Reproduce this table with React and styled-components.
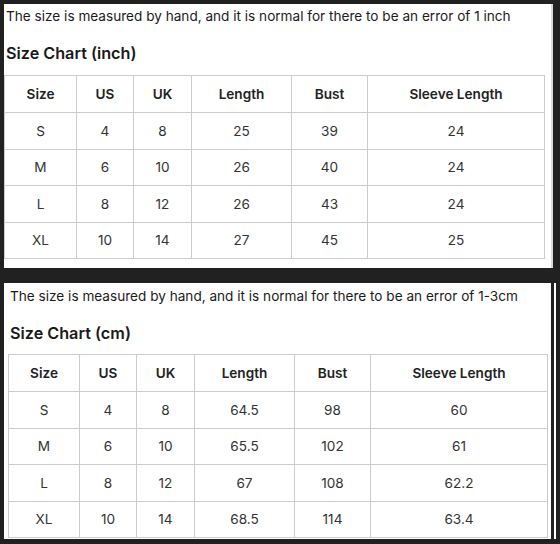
import React from "react";
import styled, { createGlobalStyle } from "styled-components";

const GlobalStyle = createGlobalStyle`
  html, body {
    margin: 0;
    padding: 0;
    background: #212121;
  }
  body {
    font-family: Inter, "Noto Sans", "Liberation Sans", sans-serif;
    width: 560px;
    height: 544px;
    overflow: hidden;
  }
`;

const Page = styled.div`
  display: flex;
  flex-direction: column;
  gap: 15px;
  padding: 4px 0 0 4px;
`;

const Panel = styled.div`
  background: #ffffff;
  width: ${(p) => p.$width}px;
  height: ${(p) => p.$height}px;
  padding: ${(p) => p.$pad};
  box-sizing: border-box;
  border-right: ${(p) => (p.$edge ? "2px solid #d9d9d9" : "none")};
  box-shadow: ${(p) => (p.$line ? "3px 0 0 #212121, 5px 0 0 #ffffff" : "none")};
`;

const Note = styled.p`
  margin: 0;
  font-size: 13.6px;
  line-height: 20px;
  color: #1a1a1a;
  padding-left: 2px;
`;

const Heading = styled.h3`
  margin: 16px 0 0;
  font-size: 16.2px;
  line-height: 22px;
  font-weight: 600;
  color: #1a1a1a;
  padding-left: 2px;
`;

const Table = styled.table`
  margin-top: ${(p) => p.$top}px;
  border-collapse: collapse;
  table-layout: fixed;
  width: ${(p) => p.$width}px;
  font-size: 13.6px;
`;

const Th = styled.th`
  border: 1px solid #cccccc;
  height: 36px;
  padding: 0;
  text-align: center;
  font-weight: 600;
  color: #222222;
`;

const Td = styled.td`
  border: 1px solid #cccccc;
  height: 35.5px;
  padding: 0;
  text-align: center;
  font-weight: 400;
  color: #333333;
`;

const headers = ["Size", "US", "UK", "Length", "Bust", "Sleeve Length"];

const charts = [
  {
    unit: "inch",
    note: "The size is measured by hand, and it is normal for there to be an error of 1 inch",
    cols: [72, 57, 58, 100, 76, 177],
    rows: [
      ["S", "4", "8", "25", "39", "24"],
      ["M", "6", "10", "26", "40", "24"],
      ["L", "8", "12", "26", "43", "24"],
      ["XL", "10", "14", "27", "45", "25"],
    ],
  },
  {
    unit: "cm",
    note: "The size is measured by hand, and it is normal for there to be an error of 1-3cm",
    cols: [71, 57, 58, 100, 76, 177],
    rows: [
      ["S", "4", "8", "64.5", "98", "60"],
      ["M", "6", "10", "65.5", "102", "61"],
      ["L", "8", "12", "67", "108", "62.2"],
      ["XL", "10", "14", "68.5", "114", "63.4"],
    ],
  },
];

function SizeTable({ chart, top }) {
  const total = chart.cols.reduce((a, b) => a + b, 0);
  return (
    <Table $top={top} $width={total}>
      <colgroup>
        {chart.cols.map((w, i) => (
          <col key={i} style={{ width: w }} />
        ))}
      </colgroup>
      <thead>
        <tr>
          {headers.map((h) => (
            <Th key={h}>{h}</Th>
          ))}
        </tr>
      </thead>
      <tbody>
        {chart.rows.map((r) => (
          <tr key={r[0]}>
            {r.map((c, i) => (
              <Td key={i}>{c}</Td>
            ))}
          </tr>
        ))}
      </tbody>
    </Table>
  );
}

export default function App() {
  const [inch, cm] = charts;
  return (
    <>
      <GlobalStyle />
      <Page>
        <Panel $width={549} $height={264} $pad="2px 0 0 0" $edge>
          <Note>{inch.note}</Note>
          <Heading>Size Chart ({inch.unit})</Heading>
          <SizeTable chart={inch} top={11} />
        </Panel>
        <Panel $width={547} $height={256} $pad="3px 0 0 4px" $line>
          <Note>{cm.note}</Note>
          <Heading>Size Chart ({cm.unit})</Heading>
          <SizeTable chart={cm} top={10} />
        </Panel>
      </Page>
    </>
  );
}
